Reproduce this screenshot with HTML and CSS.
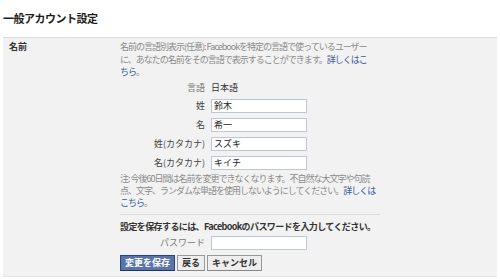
FILE: index.html
```html
<!DOCTYPE html>
<html lang="ja">
<head>
  <meta charset="UTF-8" />
  <title>一般アカウント設定</title>
  <link rel="stylesheet" href="styles.css">
</head>
<body>
  <h1 class="page-title">一般アカウント設定</h1>

  <div class="setting">
    <div class="setting-label">名前</div>
    <div class="setting-body">
      <p class="hint">名前の言語別表示(任意): Facebookを特定の言語で使っているユーザーに、あなたの名前をその言語で表示することができます。<a href="#">詳しくはこちら</a>。</p>

      <div class="fields">
        <span class="field-label">言語</span>
        <span class="field-value">日本語</span>

        <label class="field-label dark">姓</label>
        <input class="field-input" type="text" value="鈴木" />

        <label class="field-label dark">名</label>
        <input class="field-input" type="text" value="希一" />

        <label class="field-label dark">姓(カタカナ)</label>
        <input class="field-input" type="text" value="スズキ" />

        <label class="field-label dark">名(カタカナ)</label>
        <input class="field-input" type="text" value="キイチ" />
      </div>

      <p class="hint note">注: 今後60日間は名前を変更できなくなります。不自然な大文字や句読点、文字、ランダムな単語を使用しないようにしてください。<a href="#">詳しくはこちら</a>。</p>

      <div class="confirm">
        <p class="confirm-text">設定を保存するには、Facebookのパスワードを入力してください。</p>
        <div class="fields">
          <label class="field-label">パスワード</label>
          <input class="field-input" type="password" />
        </div>
        <div class="actions">
          <button class="btn primary">変更を保存</button>
          <button class="btn">戻る</button>
          <button class="btn">キャンセル</button>
        </div>
      </div>
    </div>
  </div>
</body>
</html>
```

FILE: styles.css
```css
* {
  box-sizing: border-box;
}

body {
  margin: 0;
  padding: 0 3px;
  background: #fff;
  color: #333;
  font-family: "Noto Sans CJK JP", "Liberation Sans", sans-serif;
  font-size: 9px;
}

.page-title {
  margin: 0;
  height: 37px;
  padding-top: 11px;
  font-size: 11px;
  line-height: 14px;
  letter-spacing: -0.5px;
  font-weight: bold;
  color: #1c1c1c;
}

.setting {
  display: flex;
  width: 494px;
  height: 240px;
  background: #f2f2f2;
  border-top: 1px solid #d9d9d9;
  border-bottom: 1px solid #e6e6e6;
  padding-top: 3px;
}

.setting-label {
  width: 117px;
  padding-left: 6px;
  font-weight: bold;
  line-height: 12px;
  color: #333;
}

.setting-body {
  width: 262px;
}

.hint {
  margin: 0;
  line-height: 12.5px;
  color: #8a8a8a;
  letter-spacing: -1px;
  padding-right: 8px;
}

.hint a {
  color: #3b5998;
  text-decoration: none;
}

.fields {
  display: grid;
  grid-template-columns: 85px 96px;
  column-gap: 6px;
  row-gap: 5px;
  align-items: center;
  margin-top: 3px;
}

.field-label {
  text-align: right;
  color: #777;
  line-height: 12px;
}

.field-label.dark {
  color: #444;
}

.field-value {
  line-height: 12px;
  color: #333;
}

.field-input {
  width: 96px;
  height: 14px;
  margin: 0;
  padding: 0 2px;
  border: 1px solid #bdc7d8;
  background: #fff;
  font-family: inherit;
  font-size: 9px;
  color: #222;
}

.note {
  margin-top: 3px;
  line-height: 12px;
  padding-right: 0;
}

.confirm {
  width: 260px;
  margin-top: 5px;
  border-top: 1px solid #dcdcdc;
  padding-top: 6px;
}

.confirm-text {
  margin: 0;
  line-height: 12px;
  font-weight: bold;
  letter-spacing: -0.6px;
  color: #333;
}

.confirm .fields {
  margin-top: 3px;
}

.actions {
  display: flex;
  gap: 2px;
  margin-top: 5px;
}

.btn {
  height: 16px;
  padding: 0 4px;
  border: 1px solid #999;
  border-bottom-color: #888;
  background: #eee;
  font-family: inherit;
  font-size: 9px;
  font-weight: bold;
  line-height: 14px;
  color: #333;
}

.btn.primary {
  background: #5b74a8;
  border-color: #29447e #29447e #1a356e;
  color: #fff;
}
```
